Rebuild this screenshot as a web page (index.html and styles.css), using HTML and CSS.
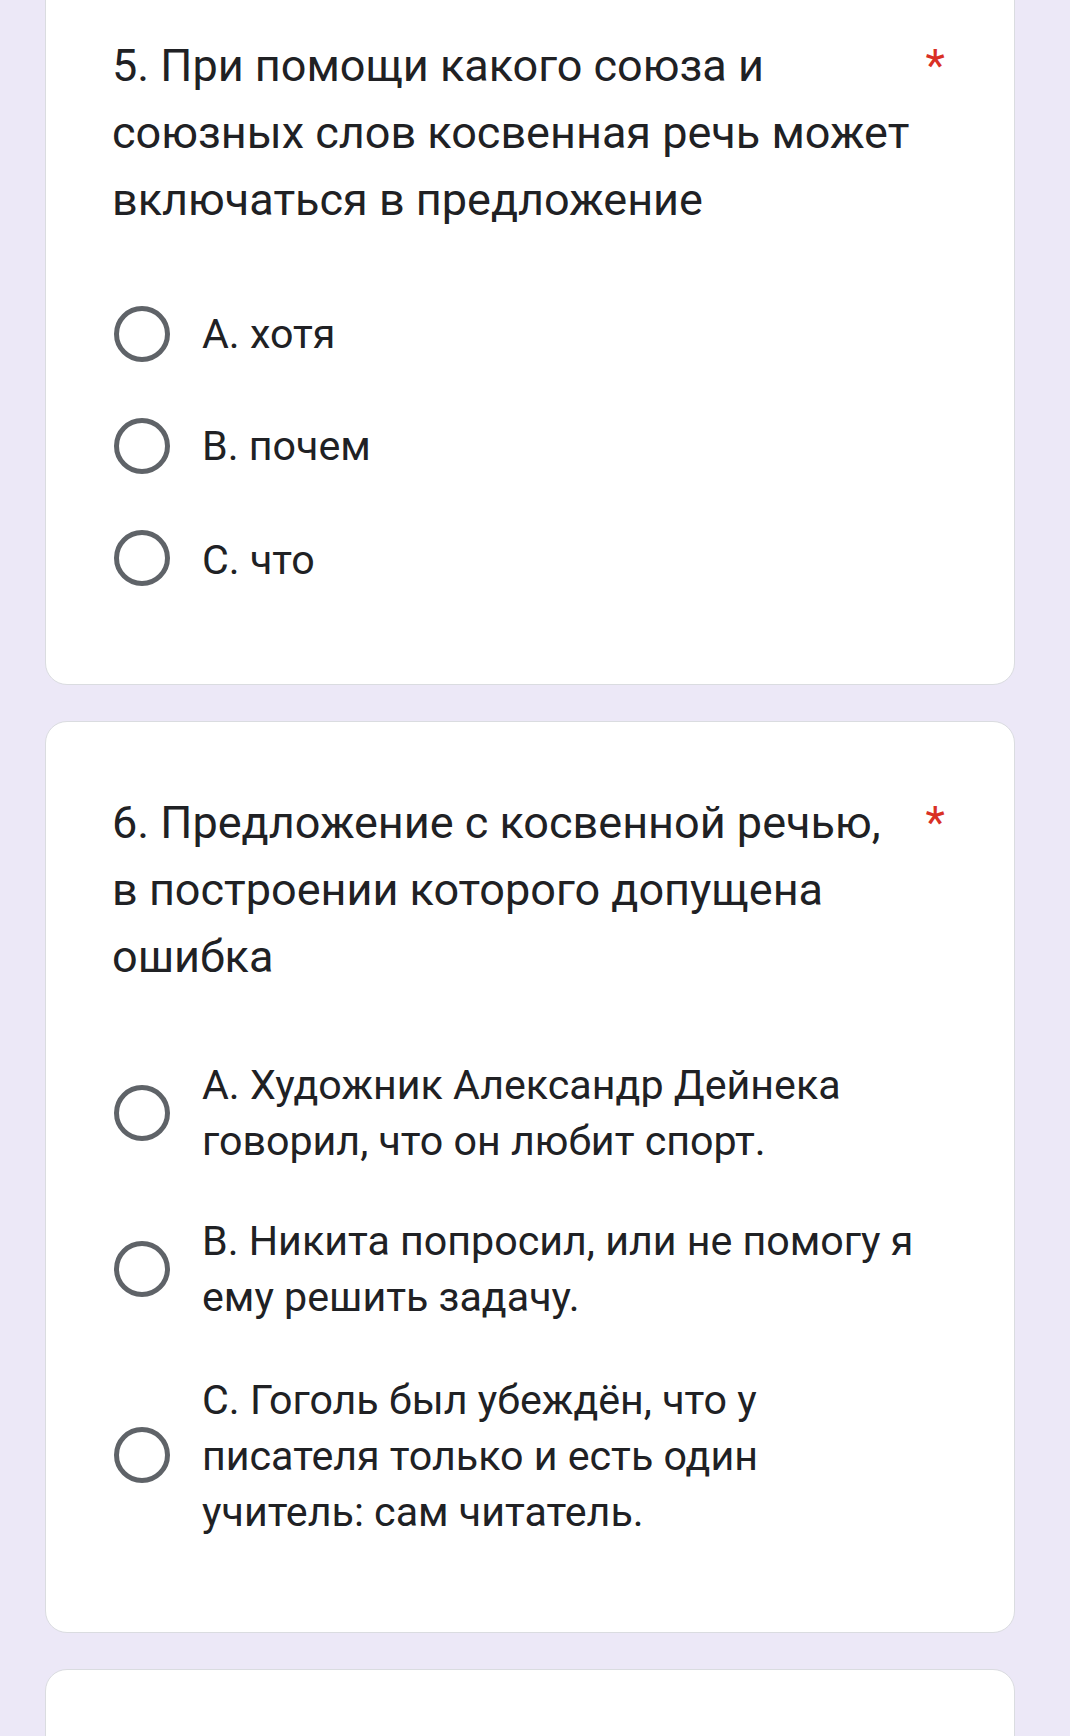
FILE: index.html
```html
<!DOCTYPE html>
<html>
	<head>
		<meta charset="utf-8">
		<title>Косвенная речь</title>
		<link rel="stylesheet" href="styles.css">
	</head>
	<body>
		<div class="page">
			<div class="card">
				<div class="title">
					<div class="title-text">5. При помощи какого союза и союзных слов косвенная речь может включаться в предложение</div>
					<span class="req">*</span>
				</div>
				<ul class="options">
					<li class="option"><span class="radio"></span><span class="label">А. хотя</span></li>
					<li class="option"><span class="radio"></span><span class="label">В. почем</span></li>
					<li class="option"><span class="radio"></span><span class="label">С. что</span></li>
				</ul>
			</div>
			<div class="card">
				<div class="title">
					<div class="title-text">6. Предложение с косвенной речью, в построении которого допущена ошибка</div>
					<span class="req">*</span>
				</div>
				<ul class="options">
					<li class="option"><span class="radio"></span><span class="label">А. Художник Александр Дейнека говорил, что он любит спорт.</span></li>
					<li class="option"><span class="radio"></span><span class="label">В. Никита попросил, или не помогу я ему решить задачу.</span></li>
					<li class="option"><span class="radio"></span><span class="label">С. Гоголь был убеждён, что у писателя только и есть один учитель: сам читатель.</span></li>
				</ul>
			</div>
			<div class="card card-next"></div>
		</div>
	</body>
</html>
```

FILE: styles.css
```css
*{margin:0;padding:0;box-sizing:border-box;}
ul{list-style:none;}
body{background:#ece8f7;font-family:Roboto,"Noto Sans",sans-serif;color:#202124;overflow:hidden;}
div.page{padding:0 55px 0 45px;margin-top:-36px;display:flex;flex-direction:column;gap:36px;}
div.card{background:#fff;border:1px solid #dadce0;border-radius:22px;padding:67px 69px 70px 66px;}
div.card-next{height:200px;}
div.title{display:flex;align-items:flex-start;margin-bottom:45px;}
div.title-text{flex:0 0 802px;font-size:45px;line-height:67px;}
span.req{flex:none;color:#d93025;font-size:45px;line-height:67px;margin-left:auto;}
li.option{display:flex;align-items:center;min-height:112px;}
li.option>span.radio{flex:none;width:56px;height:56px;border:5px solid #5f6368;border-radius:50%;margin:0 32px 0 2px;}
li.option>span.label{flex:1;font-size:41.2px;line-height:56px;padding:22px 23px 22px 0;}
li.option:last-child>span.label{padding-top:25px;}
```
